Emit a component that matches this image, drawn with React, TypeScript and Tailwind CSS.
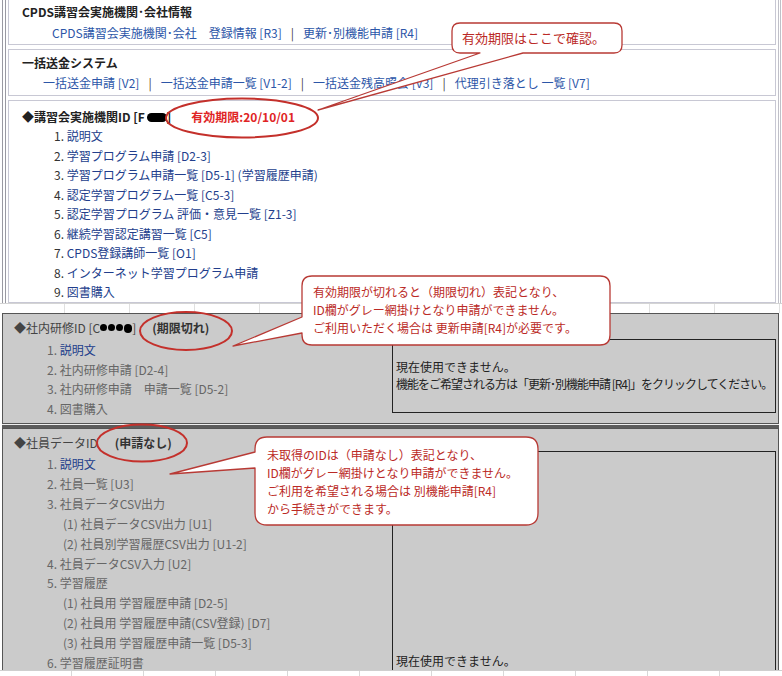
import React from 'react';

const topItems = [
  '説明文',
  '学習プログラム申請 [D2-3]',
  '学習プログラム申請一覧 [D5-1] (学習履歴申請)',
  '認定学習プログラム一覧 [C5-3]',
  '認定学習プログラム 評価・意見一覧 [Z1-3]',
  '継続学習認定講習一覧 [C5]',
  'CPDS登録講師一覧 [O1]',
  'インターネット学習プログラム申請',
  '図書購入',
];

const trainingItems = ['社内研修申請 [D2-4]', '社内研修申請　申請一覧 [D5-2]', '図書購入'];

// sub = indented "(n)" rows
const staffItems: { label: string; sub?: boolean }[] = [
  { label: '2. 社員一覧 [U3]' },
  { label: '3. 社員データCSV出力' },
  { label: '(1) 社員データCSV出力 [U1]', sub: true },
  { label: '(2) 社員別学習履歴CSV出力 [U1-2]', sub: true },
  { label: '4. 社員データCSV入力 [U2]' },
  { label: '5. 学習履歴' },
  { label: '(1) 社員用 学習履歴申請 [D2-5]', sub: true },
  { label: '(2) 社員用 学習履歴申請(CSV登録) [D7]', sub: true },
  { label: '(3) 社員用 学習履歴申請一覧 [D5-3]', sub: true },
  { label: '6. 学習履歴証明書' },
];

function Sep() {
  return <span className="mx-[9px] text-[#444]">|</span>;
}

function Blob({ className }: { className: string }) {
  return <span className={'inline-block rounded-full bg-black ' + className} />;
}

export default function App() {
  return (
    <div className="relative w-[782px] h-[676px] overflow-hidden bg-white text-[12px] text-[#222] font-['Noto_Sans_CJK_JP','Liberation_Sans',sans-serif]">
      {/* white upper part */}
      <div className="ml-[2px] mr-[1px] h-[303px] flex flex-col gap-[4px] border-l-[4px] border-r-[3px] border-double border-l-[#9a9aa2] border-r-[#c0c0c8] pl-[2px] pr-[2px]">
        <div className="border-x border-b border-[#c8c8d4] pt-[4px] pb-[3px]">
          <div className="pl-[13px] leading-[16px] font-bold text-[#222]">CPDS講習会実施機関･会社情報</div>
          <div className="mt-[5px] pl-[43px] leading-[16px] text-[#2c56a8]">
            CPDS講習会実施機関･会社　登録情報 [R3]
            <Sep />
            更新･別機能申請 [R4]
          </div>
        </div>

        <div className="border border-[#c8c8d4] pt-[5px] pb-[4px]">
          <div className="pl-[13px] leading-[16px] font-bold text-[#222]">一括送金システム</div>
          <div className="mt-[4px] pl-[34px] leading-[16px] text-[#2c56a8]">
            一括送金申請 [V2]
            <Sep />
            一括送金申請一覧 [V1-2]
            <Sep />
            一括送金残高照会 [V3]
            <Sep />
            代理引き落とし 一覧 [V7]
          </div>
        </div>

        <div className="flex-1 border border-[#c8c8d4] pt-[8px]">
          <div className="pl-[13px] leading-[16px] flex items-center font-bold text-[#222]">
            <span>◆講習会実施機関ID [F</span>
            <Blob className="w-[20px] h-[9px] ml-[2px]" />
            <span>]</span>
            <span className="ml-[20px] text-[#e02424]">有効期限:20/10/01</span>
          </div>
          <ol className="mt-[1px] pl-[45px]">
            {topItems.map((t, i) => (
              <li key={t} className="leading-[19.5px]">
                <span className="text-[#333]">{i + 1}. </span>
                <span className="text-[#223e8c]">{t}</span>
              </li>
            ))}
          </ol>
        </div>
      </div>

      {/* faint grid strip */}
      <div className="h-[10px] flex border-t border-[#d4d4d4]">
        {Array.from({ length: 12 }).map((_, i) => (
          <div key={i} className="w-[65px] shrink-0 border-r border-[#e0e0e0]" />
        ))}
      </div>

      {/* 社内研修 (expired) */}
      <div className="ml-[2px] mr-[3px] h-[111px] border border-[#555] bg-[#cbcbcb] pt-[6px] pl-[11px]">
        <div className="leading-[16px] flex items-center text-[#444]">
          <span>◆社内研修ID [C</span>
          <span className="flex gap-[1px]">
            <Blob className="w-[7px] h-[7px]" />
            <Blob className="w-[7px] h-[7px]" />
            <Blob className="w-[7px] h-[7px]" />
            <Blob className="w-[8px] h-[9px]" />
          </span>
          <span>]</span>
          <span className="ml-[16px] font-bold text-[#333]">(期限切れ)</span>
        </div>
        <div className="mt-[3px] flex">
          <ol className="flex-1 pl-[33px] pt-[1px] text-[#666]">
            <li className="leading-[19.7px]">
              1. <span className="text-[#223e8c]">説明文</span>
            </li>
            {trainingItems.map((t, i) => (
              <li key={t} className="leading-[19.7px]">
                {i + 2}. {t}
              </li>
            ))}
          </ol>
          <div className="w-[384px] h-[74px] mr-[2px] border border-[#222] pt-[18px] pl-[3px] leading-[17px] text-[#222] whitespace-nowrap overflow-hidden">
            <p>現在使用できません。</p>
            <p className="tracking-[-1px]">機能をご希望される方は「更新･別機能申請 [R4]」をクリックしてください。</p>
          </div>
        </div>
      </div>

      <div className="ml-[2px] mr-[3px] h-[4px] border-t border-[#eee] bg-[#5c5c5c]" />

      {/* 社員データ (not applied) */}
      <div className="ml-[2px] mr-[3px] h-[242px] overflow-hidden border-x border-t border-[#555] bg-[#cbcbcb] pt-[6px] pl-[11px]">
        <div className="leading-[16px] flex items-center text-[#444]">
          <span>◆社員データID</span>
          <span className="ml-[17px] font-bold text-[#333]">(申請なし)</span>
        </div>
        <div className="flex">
          <ol className="flex-1 pl-[33px] pt-[3px] text-[#666]">
            <li className="leading-[19.9px]">
              1. <span className="text-[#223e8c]">説明文</span>
            </li>
            {staffItems.map((it) => (
              <li key={it.label} className={it.sub ? 'leading-[19.9px] pl-[16px]' : 'leading-[19.9px]'}>
                {it.label}
              </li>
            ))}
          </ol>
          <div className="w-[384px] h-[260px] mr-[2px] border border-[#222] pt-[201px] pl-[3px] leading-[16px] text-[#222]">
            現在使用できません。
          </div>
        </div>
      </div>

      <div className="h-[6px] flex border-t border-[#cfcfcf]">
        {Array.from({ length: 11 }).map((_, i) => (
          <div key={i} className="w-[72px] shrink-0 border-r border-[#d8d8d8]" />
        ))}
      </div>

      {/* annotation overlay */}
      <svg className="absolute inset-0 pointer-events-none" width="782" height="676" viewBox="0 0 782 676">
        <g fill="none" stroke="#c4302b" strokeWidth="2">
          <ellipse cx="242" cy="118" rx="76" ry="19.5" />
          <ellipse cx="186" cy="331" rx="46" ry="19" />
          <ellipse cx="142" cy="443" rx="45" ry="18.5" />
        </g>
        <g fill="#fff" stroke="#b83a35" strokeWidth="1.3" strokeLinejoin="round">
          <path d="M460,23 H614 Q622,23 622,31 V45 Q622,53 614,53 H523 L318,110 L480,53 H460 Q452,53 452,45 V31 Q452,23 460,23 Z" />
          <path d="M312,276 H600 Q610,276 610,286 V335 Q610,345 600,345 H312 Q302,345 302,335 V333 L233,346 L302,317 V286 Q302,276 312,276 Z" />
          <path d="M267,437 H526 Q538,437 538,449 V513 Q538,525 526,525 H267 Q255,525 255,513 V468 L170,474 L255,452 V449 Q255,437 267,437 Z" />
        </g>
      </svg>

      <div className="absolute left-[462px] top-[29px] text-[13px] leading-[18px] text-[#bb2a26]">有効期限はここで確認。</div>
      <div className="absolute left-[313px] top-[283px] leading-[18px] text-[#bb2a26]">
        <p>有効期限が切れると（期限切れ）表記となり、</p>
        <p>ID欄がグレー網掛けとなり申請ができません。</p>
        <p>ご利用いただく場合は 更新申請[R4]が必要です。</p>
      </div>
      <div className="absolute left-[267px] top-[446px] leading-[18px] text-[#bb2a26]">
        <p>未取得のIDは（申請なし）表記となり、</p>
        <p>ID欄がグレー網掛けとなり申請ができません。</p>
        <p>ご利用を希望される場合は 別機能申請[R4]</p>
        <p>から手続きができます。</p>
      </div>
    </div>
  );
}
